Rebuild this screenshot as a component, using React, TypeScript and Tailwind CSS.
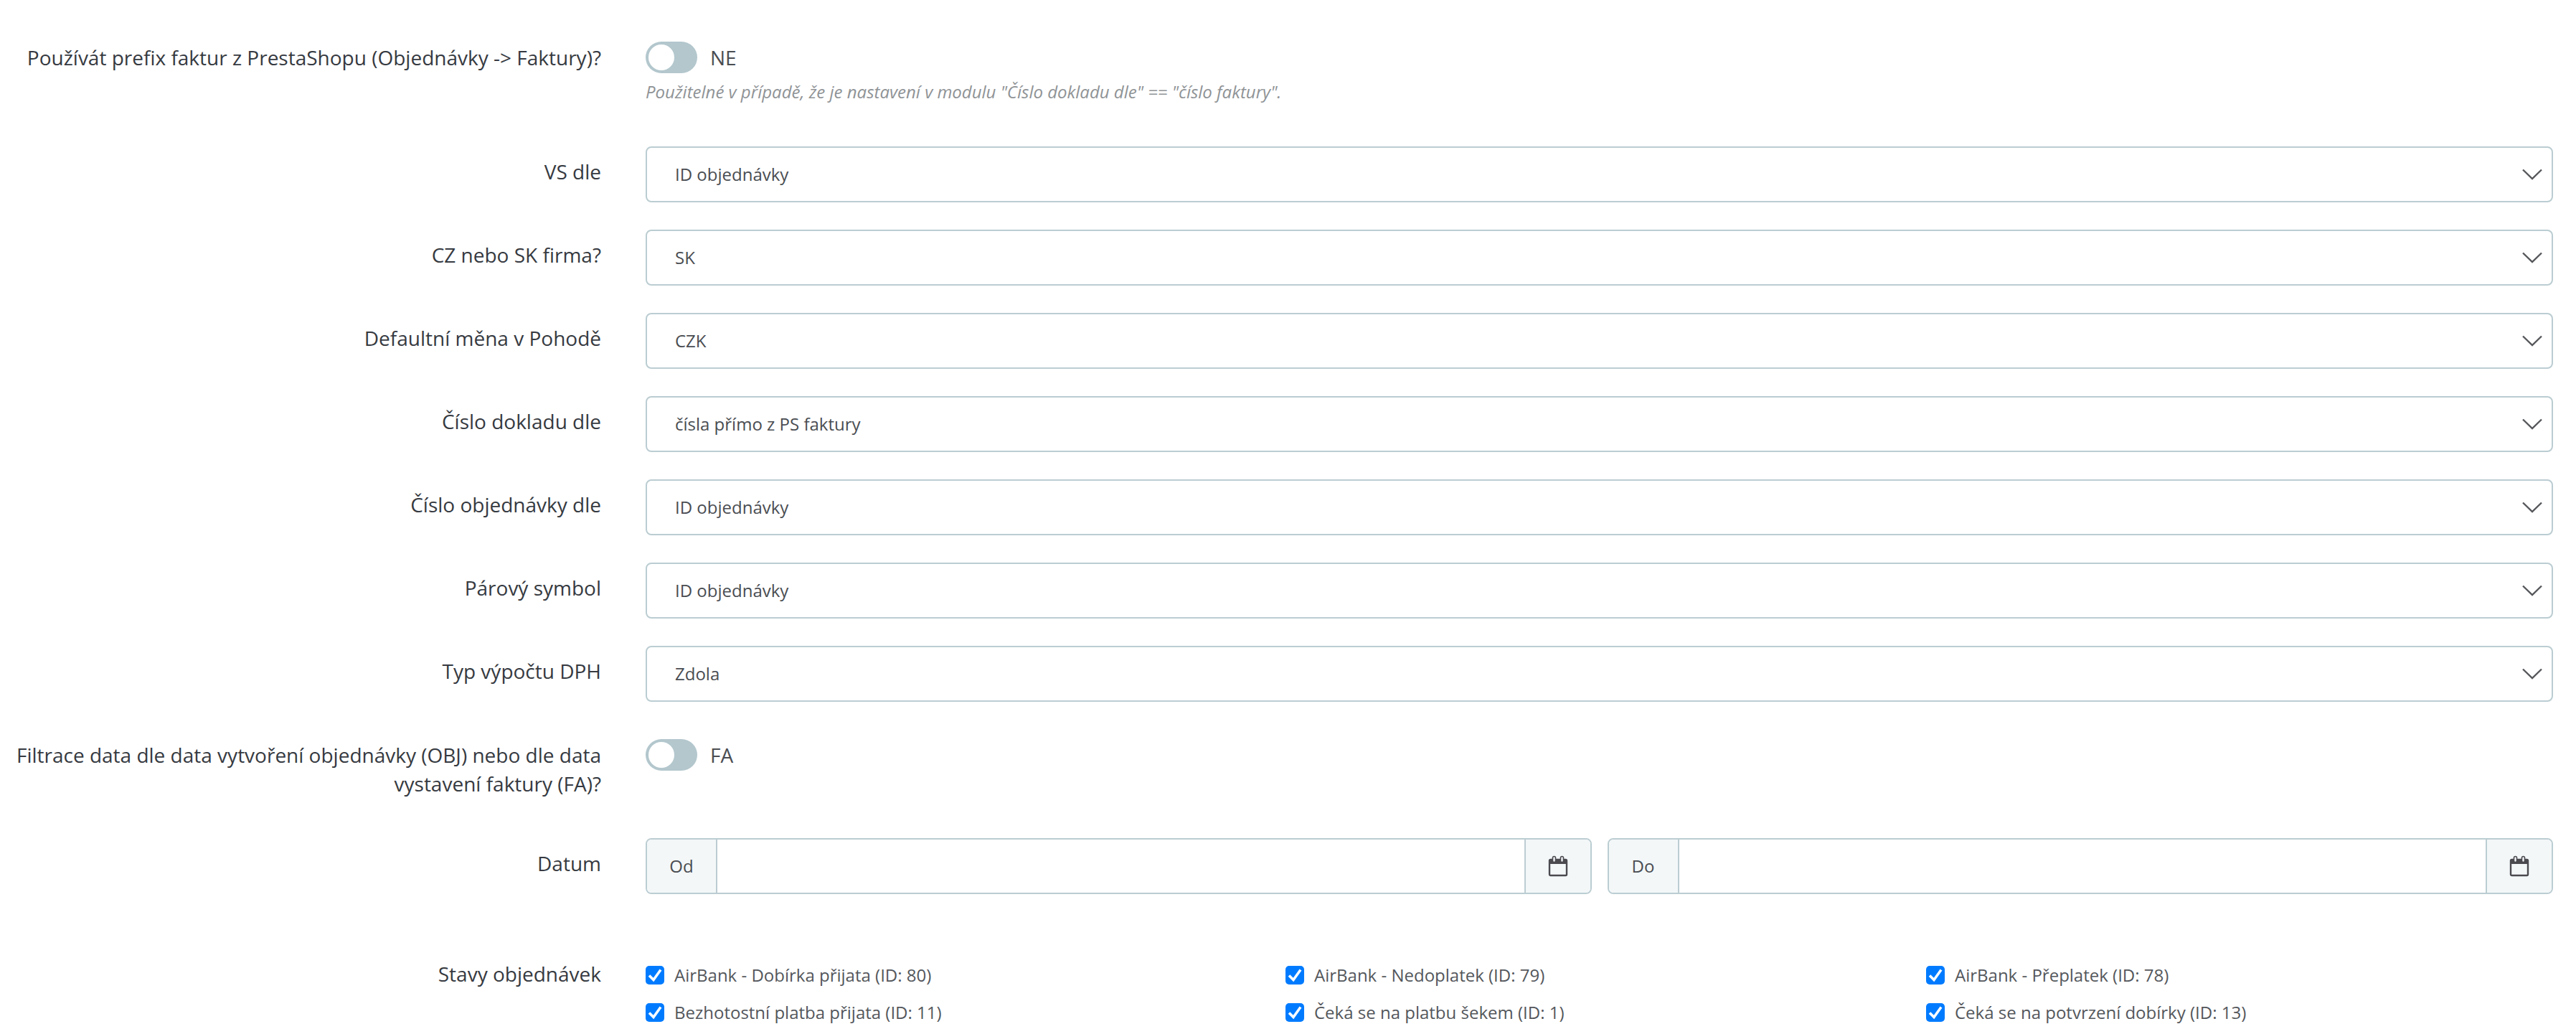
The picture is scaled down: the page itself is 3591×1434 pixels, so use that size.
const selects = [
  { label: 'VS dle', value: 'ID objednávky' },
  { label: 'CZ nebo SK firma?', value: 'SK' },
  { label: 'Defaultní měna v Pohodě', value: 'CZK' },
  { label: 'Číslo dokladu dle', value: 'čísla přímo z PS faktury' },
  { label: 'Číslo objednávky dle', value: 'ID objednávky' },
  { label: 'Párový symbol', value: 'ID objednávky' },
  { label: 'Typ výpočtu DPH', value: 'Zdola' },
];

const statuses = [
  'AirBank - Dobírka přijata (ID: 80)',
  'AirBank - Nedoplatek (ID: 79)',
  'AirBank - Přeplatek (ID: 78)',
  'Bezhotostní platba přijata (ID: 11)',
  'Čeká se na platbu šekem (ID: 1)',
  'Čeká se na potvrzení dobírky (ID: 13)',
];

function Toggle({ text }: { text: string }) {
  return (
    <div className="flex items-center gap-[18px]">
      <div className="flex h-[44px] w-[72px] items-center rounded-full bg-[#b3c7cd] pl-[4px]">
        <div className="h-[36px] w-[36px] rounded-full bg-white" />
      </div>
      <span className="text-[28px] leading-[40px] text-[#4a4d52]">{text}</span>
    </div>
  );
}

function CalendarIcon() {
  return (
    <svg width="28" height="30" viewBox="0 0 28 30" fill="none">
      <rect x="2" y="6" width="24" height="22" rx="1.5" stroke="#4a4a4f" strokeWidth="2.4" />
      <path d="M2 6h24v6H2z" fill="#4a4a4f" />
      <rect x="6.5" y="1.5" width="4" height="8" rx="2" fill="#f3f7f8" stroke="#4a4a4f" strokeWidth="1.6" />
      <rect x="17.5" y="1.5" width="4" height="8" rx="2" fill="#f3f7f8" stroke="#4a4a4f" strokeWidth="1.6" />
    </svg>
  );
}

function DateGroup({ prefix }: { prefix: string }) {
  return (
    <div className="flex h-[78px] flex-1 overflow-hidden rounded-[8px] border-2 border-[#bbcdd2]">
      <div className="flex w-[98px] items-center justify-center border-r-2 border-[#bbcdd2] bg-[#f3f7f8] text-[24px] text-[#4a4d52]">
        {prefix}
      </div>
      <div className="flex-1 bg-white" />
      <div className="flex w-[92px] items-center justify-center border-l-2 border-[#bbcdd2] bg-[#f3f7f8]">
        <CalendarIcon />
      </div>
    </div>
  );
}

function Status({ text }: { text: string }) {
  return (
    <div className="flex h-[26px] items-center gap-[14px]">
      <span className="flex h-[26px] w-[26px] items-center justify-center rounded-[5px] bg-[#007bff]">
        <svg width="26" height="26" viewBox="0 0 26 26" fill="none">
          <path d="M5 13.5l6 6L21 5.5" stroke="#fff" strokeWidth="3.6" />
        </svg>
      </span>
      <span className="text-[24px] leading-[26px] text-[#54575c]">{text}</span>
    </div>
  );
}

export default function App() {
  return (
    <div className="h-[1434px] overflow-hidden bg-white pt-[58px] pr-[32px] font-['Open_Sans',sans-serif] text-[#363a41]">
      {/* Prefix */}
      <div className="mb-[58px] flex items-start gap-[62px]">
        <div className="w-[838px] pt-[2px] text-right text-[28px] leading-[40px]">
          Používát prefix faktur z PrestaShopu (Objednávky -&gt; Faktury)?
        </div>
        <div>
          <Toggle text="NE" />
          <p className="mt-[8px] text-[24px] leading-[36px] text-[#8f9396] italic">
            Použitelné v případě, že je nastavení v modulu "Číslo dokladu dle" == "číslo faktury".
          </p>
        </div>
      </div>

      {/* Selects */}
      {selects.map((row) => (
        <div key={row.label} className="mb-[38px] flex items-start gap-[62px]">
          <div className="w-[838px] pt-[15px] text-right text-[28px] leading-[40px]">{row.label}</div>
          <div className="flex h-[78px] flex-1 items-center justify-between rounded-[8px] border-2 border-[#bbcdd2] bg-white pr-[12px] pl-[39px]">
            <span className="text-[24px] text-[#4a4d52]">{row.value}</span>
            <svg width="30" height="18" viewBox="0 0 30 18" fill="none">
              <path d="M2 2.5l13 12.5L28 2.5" stroke="#55575a" strokeWidth="2.4" />
            </svg>
          </div>
        </div>
      ))}

      {/* Date filter */}
      <div className="mt-[52px] mb-[56px] flex items-start gap-[62px]">
        <div className="w-[838px] pt-[2px] text-right text-[28px] leading-[40px]">
          Filtrace data dle data vytvoření objednávky (OBJ) nebo dle data vystavení faktury (FA)?
        </div>
        <Toggle text="FA" />
      </div>

      <div className="mb-[100px] flex items-start gap-[62px]">
        <div className="w-[838px] pt-[15px] text-right text-[28px] leading-[40px]">Datum</div>
        <div className="flex flex-1 gap-[22px]">
          <DateGroup prefix="Od" />
          <DateGroup prefix="Do" />
        </div>
      </div>

      {/* Statuses */}
      <div className="flex items-start gap-[62px]">
        <div className="-mt-[9px] w-[838px] text-right text-[28px] leading-[40px]">Stavy objednávek</div>
        <div className="grid flex-1 grid-cols-[892px_893px_1fr] gap-y-[26px]">
          {statuses.map((s) => (
            <Status key={s} text={s} />
          ))}
        </div>
      </div>
    </div>
  );
}
